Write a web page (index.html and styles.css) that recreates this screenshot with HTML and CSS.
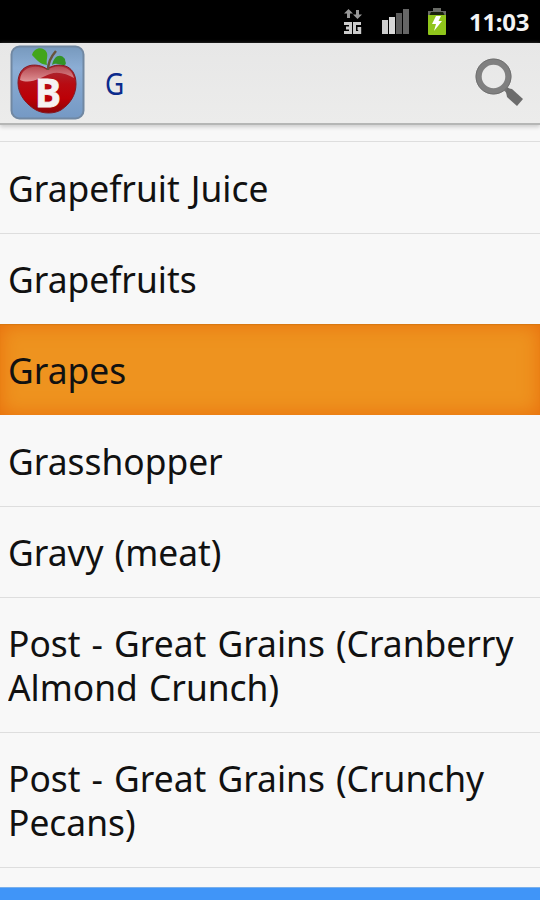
FILE: index.html
```
<!DOCTYPE html>
<html lang="en">
<head>
<meta charset="utf-8">
<title>Foods</title>
<link rel="stylesheet" href="styles.css">
</head>
<body>
<div class="screen">
  <div class="status">
    <svg class="net" width="20" height="26" viewBox="0 0 20 26">
      <path d="M5.500 0 10 4.500H7V9H4V4.500H1ZM14.500 10 10 5.500H13V1H16V5.500H19Z" fill="#999"/>
      <path d="M1 14.500H7.500V23.500H1M3 19H7.500M18 14.500H11.500V23.500H16.700V19.500H14.500" fill="none" stroke="#ccc" stroke-width="3"/>
    </svg>
    <svg class="signal" width="28" height="26" viewBox="0 0 28 26">
      <path d="M0 11H6V25H0Z" fill="#ccc"/><path d="M7 8H13V25H7Z" fill="#d8d8d8"/>
      <path d="M14 4H20V25H14Z" fill="#5c5c5c"/><path d="M21 0H27V25H21Z" fill="#666"/>
    </svg>
    <svg class="battery" width="20" height="28" viewBox="0 0 20 28">
      <path d="M6 0H14V3H19V7H1V3H6Z" fill="#696b66"/>
      <path d="M4 4H16L18 8H2Z" fill="#18200c"/>
      <path d="M1 7H19V26Q19 27 18 27H2Q1 27 1 26Z" fill="#8fc51b"/>
      <path d="M9 8H14L11.500 13H15L7 23 9 16H5Z" fill="#fff"/>
    </svg>
    <span class="clock">11:03</span>
  </div>
  <header class="bar">
    <svg class="logo" width="76" height="76" viewBox="0 0 76 76">
      <defs>
        <linearGradient id="tile" x1="0" y1="0" x2="0" y2="1"><stop offset="0" stop-color="#7799bd"/><stop offset=".3" stop-color="#8caed5"/><stop offset="1" stop-color="#7599c4"/></linearGradient>
        <linearGradient id="apple" x1="0" y1="0" x2="0" y2="1"><stop offset="0" stop-color="#a6303a"/><stop offset=".4" stop-color="#b80b12"/><stop offset=".7" stop-color="#bc0006"/><stop offset="1" stop-color="#8c0508"/></linearGradient>
        <linearGradient id="shine" x1="0" y1="0" x2="0" y2="1"><stop offset="0" stop-color="#fff" stop-opacity=".15"/><stop offset="1" stop-color="#fff" stop-opacity=".55"/></linearGradient>
      </defs>
      <rect x="1.500" y="1.500" width="72" height="72" rx="8" fill="url(#tile)" stroke="#7188a2" stroke-width="2"/>
      <path d="M37 24C27 17 8 18 8 38 8 50 17 60 26 65 33 69 44 69 51 65 60 59 66 50 66 39 66 18 47 17 37 24Z" fill="url(#apple)" stroke="#861820" stroke-width="1"/>
      <path d="M37 25C27 19 11 21 10 35 21 40 31 32 40 29 48 26 57 29 64 33 61 20 46 19 37 25Z" fill="url(#shine)"/>
      <path d="M38 25Q38 15 46 6" fill="none" stroke="#67543b" stroke-width="2.500"/>
      <path d="M22 10C24 2 34 1 37 8 38 12 36 15 37 20 30 19 29 17 22 10Z" fill="#42a51c"/>
      <path d="M42 20C44 10 51 8 55 14 55 17 57 18 55 20 50 20 46 17 42 20Z" fill="#349326"/>
      <text x="25" y="62" class="logo-letter" textLength="26" lengthAdjust="spacingAndGlyphs">B</text>
    </svg>
    <h1 class="title">G</h1>
    <svg class="search" width="52" height="52" viewBox="0 0 52 52">
      <path d="M30 30 36 36" stroke="#777" stroke-width="5"/>
      <path d="M33 31 38 32 49 42 43 49 33 40 32 35Z" fill="#6c6c6c"/>
      <circle cx="19.500" cy="19.500" r="14.800" fill="none" stroke="#808080" stroke-width="6"/>
      <circle cx="19.500" cy="19.500" r="17.500" fill="none" stroke="#707070" stroke-width="1"/>
    </svg>
  </header>
  <ul class="list">
    <li class="row tail"></li>
    <li class="row"><span class="name">Grapefruit Juice</span></li>
    <li class="row"><span class="name">Grapefruits</span></li>
    <li class="row selected"><span class="name">Grapes</span></li>
    <li class="row"><span class="name">Grasshopper</span></li>
    <li class="row"><span class="name">Gravy (meat)</span></li>
    <li class="row tall"><span class="name">Post - Great Grains (Cranberry<br>Almond Crunch)</span></li>
    <li class="row tall"><span class="name">Post - Great Grains (Crunchy<br>Pecans)</span></li>
  </ul>
  <div class="footer"></div>
</div>
</body>
</html>
```
FILE: styles.css
```
* { box-sizing: border-box; }
body { margin: 0; font-family: "Noto Sans", "Open Sans", sans-serif; }
.screen { display: flex; flex-direction: column; width: 540px; height: 900px; overflow: hidden; background: #f8f8f8; }
.status { display: flex; align-items: center; flex: none; height: 43px; padding-left: 343px; background: #000; }
.net { margin-top: 1px; }
.signal { margin-left: 19px; }
.battery { margin-left: 17px; margin-top: 1px; }
.clock { color: #f4f4f4; margin-left: 22px; font-size: 24px; font-weight: 700; letter-spacing: -.3px; white-space: nowrap; }
.bar { display: flex; align-items: center; flex: none; height: 82px; padding: 0 14px 1px 10px; background: linear-gradient(#e7e7e7, #ececeb); border-bottom: 2px solid #b5b6b5; box-shadow: 0 2px 4px #ccc; position: relative; }
.logo-letter { font: 700 40px "Noto Sans", sans-serif; fill: #f6f3f2; stroke: #f6f3f2; stroke-width: .8px; }
.title { margin: 2px 0 0 19px; color: #0b2b8c; font-size: 30px; font-weight: 400; transform: scaleX(.88); transform-origin: left; }
.search { margin-left: auto; }
.list { flex: none; margin: 0; padding: 0; list-style: none; }
.row { display: flex; align-items: center; height: 91px; padding: 0 0 0 8px; border-bottom: 1px solid #dedede; color: #111; font-size: 37px; line-height: 44px; white-space: nowrap; }
.name { word-spacing: 2px; transform: scaleX(.956); transform-origin: left; }
.tail { height: 17px; padding: 0; }
.tail + .row { height: 92px; }
.selected { height: 92px; margin-top: -1px; border-bottom: 1px solid #f8f8f8; background: #ee931f; background-clip: padding-box; box-shadow: inset 0 1px 1px #d87710, inset 0 0 20px #e96d0c; }
.tall { height: 135px; }
.footer { flex: none; height: 13px; margin-top: auto; background: #4095f8; border-top: 1px solid #79b0ec; }
```
